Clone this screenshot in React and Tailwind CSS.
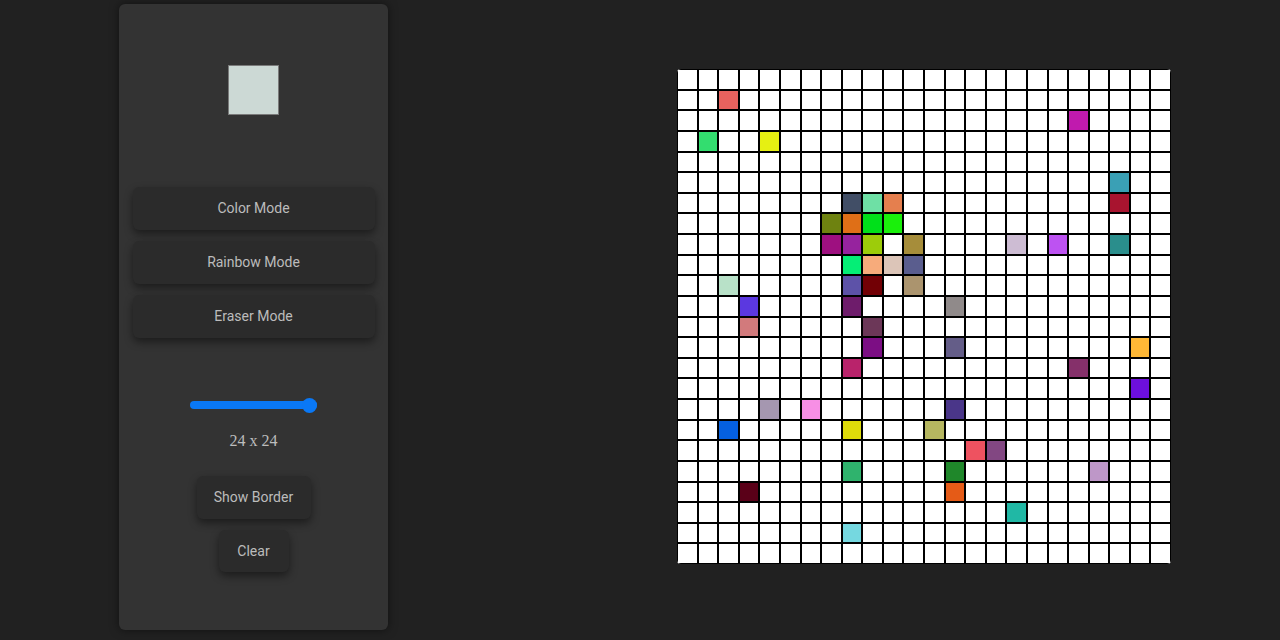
import React from 'react';

// painted cells: [row, col, colour]
const painted = [
  [1, 2, '#e8625e'], [2, 19, '#c01aae'], [3, 1, '#33dd6f'], [3, 4, '#e6f012'],
  [5, 21, '#3aa0b5'], [6, 8, '#414e66'], [6, 9, '#6ee0a5'], [6, 10, '#e57f4e'],
  [6, 21, '#a8142f'], [7, 7, '#6e8210'], [7, 8, '#df6f17'], [7, 9, '#00e01a'],
  [7, 10, '#1af00b'], [8, 7, '#9e1080'], [8, 8, '#96239e'], [8, 9, '#9dcc0a'],
  [8, 11, '#a68d3a'], [8, 16, '#cdbcd3'], [8, 18, '#bd52f2'], [8, 21, '#2a8e8c'],
  [9, 8, '#05ee76'], [9, 9, '#f7ab7b'], [9, 10, '#dcc5b8'], [9, 11, '#5a5d8e'],
  [10, 2, '#b8e1c8'], [10, 8, '#5d52a8'], [10, 9, '#720005'], [10, 11, '#ab946e'],
  [11, 3, '#5b38e0'], [11, 8, '#6e1c6b'], [11, 13, '#908a8a'], [12, 3, '#d27a7c'],
  [12, 9, '#6c3758'], [13, 9, '#7c0e84'], [13, 13, '#645d88'], [13, 22, '#ffb836'],
  [14, 8, '#b9236b'], [14, 19, '#85306a'], [15, 22, '#6d0fdd'], [16, 4, '#a597b0'],
  [16, 6, '#f78fe5'], [16, 13, '#4a3689'], [17, 2, '#0560e0'], [17, 8, '#dedc0a'],
  [17, 12, '#b6b760'], [18, 14, '#ee5260'], [18, 15, '#824782'], [19, 8, '#2fb36d'],
  [19, 13, '#1f872a'], [19, 20, '#be97c8'], [20, 3, '#5a0018'], [20, 13, '#e55b17'],
  [21, 16, '#20b8a5'], [22, 8, '#75d8e0'],
];

const SIZE = 24;
const colours = {};
painted.forEach(([r, c, col]) => { colours[r * SIZE + c] = col; });

const btn = 'rounded-md bg-[#2b2b2b] text-[14px] text-[#bcbcbc] shadow-[0_4px_8px_rgba(0,0,0,0.45)]';

const App = () => {
  const cells = Array.from({ length: SIZE * SIZE }, (_, i) => i);

  return (
    <div className="w-[1280px] h-[640px] bg-[#212121] flex items-start font-['Roboto','Liberation_Sans',Arial,sans-serif] overflow-hidden">
      {/* Controls */}
      <div className="ml-[119px] mt-[4px] w-[269px] h-[626px] bg-[#333333] rounded-md shadow-[0_0_10px_rgba(0,0,0,0.5)] flex flex-col items-center">
        <div className="mt-[61px] w-[51px] h-[50px] bg-[#ccd9d5] border border-[#7a7a7a]" />

        <div className="mt-[72px] flex flex-col gap-[11px]">
          <button className={`w-[242px] h-[43px] ${btn}`}>Color Mode</button>
          <button className={`w-[242px] h-[43px] ${btn}`}>Rainbow Mode</button>
          <button className={`w-[242px] h-[43px] ${btn}`}>Eraser Mode</button>
        </div>

        {/* size slider */}
        <div className="mt-[59px] w-[127px] h-[16px] flex items-center relative">
          <div className="w-full h-[8px] rounded-full bg-[#0a78f5]" />
          <div className="absolute right-0 w-[15px] h-[15px] rounded-full bg-[#0a78f5]" />
        </div>
        <p className="mt-[16px] text-[16px] text-[#bdbdbd] font-['Liberation_Serif','Times_New_Roman',serif]">24 x 24</p>

        <button className={`mt-[23px] w-[114px] h-[43px] ${btn}`}>Show Border</button>
        <button className={`mt-[11px] w-[70px] h-[42px] ${btn}`}>Clear</button>
      </div>

      {/* Sketch grid */}
      <div className="ml-[289px] mt-[69px] w-[494px] h-[495px] grid grid-cols-[repeat(24,1fr)] grid-rows-[repeat(24,1fr)] bg-white rounded-sm overflow-hidden">
        {cells.map((i) => (
          <div
            key={i}
            className="border border-black"
            style={{ backgroundColor: colours[i] || '#ffffff' }}
          />
        ))}
      </div>
    </div>
  );
};

export default App;
